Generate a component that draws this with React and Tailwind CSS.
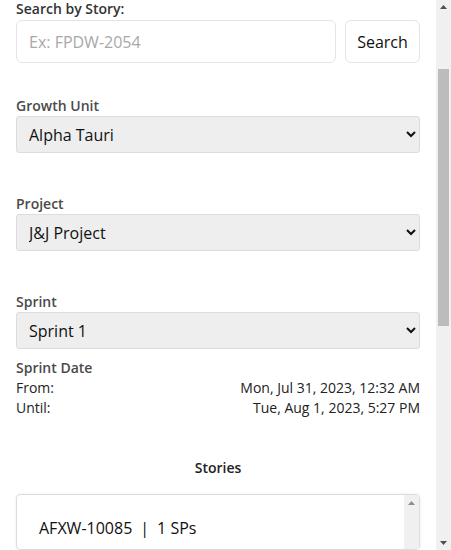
import React from "react";

const font = { fontFamily: '"Open Sans", "Noto Sans", sans-serif' };

function Field({ label, value }) {
  return (
    <div className="flex flex-col">
      <label className="text-[14px] leading-[20px] font-semibold text-[#4a4a4a]">{label}</label>
      <select
        defaultValue={value}
        className="h-[37px] w-full rounded-[3px] border border-[#dcdcdc] bg-[#eeeeee] pl-[8px] pr-2 text-[16px] text-[#111]"
      >
        <option>{value}</option>
      </select>
    </div>
  );
}

function Arrow({ up }) {
  return (
    <svg width="7" height="4" viewBox="0 0 7 4" className="fill-[#505050]">
      {up ? <polygon points="0,4 7,4 3.5,0" /> : <polygon points="0,0 7,0 3.5,4" />}
    </svg>
  );
}

export default function App() {
  return (
    <div className="flex h-[550px] w-[451px] overflow-hidden bg-white text-[#222]" style={font}>
      <div className="flex w-[436px] flex-col px-[16px]">
        <div className="text-[14px] leading-[18px] font-semibold text-[#333]">Search by Story:</div>
        <div className="mt-[2px] flex gap-[9px]">
          <input
            placeholder="Ex: FPDW-2054"
            className="h-[43px] w-[320px] rounded-[6px] border border-[#e2e5e8] px-[12px] text-[16px] placeholder:text-[#a8a8a8]"
          />
          <button className="h-[43px] w-[75px] rounded-[6px] border border-[#e2e5e8] bg-white text-[16px] text-[#111]">
            Search
          </button>
        </div>

        <div className="mt-[33px] flex flex-col gap-[41px]">
          <Field label="Growth Unit" value="Alpha Tauri" />
          <Field label="Project" value="J&J Project" />
          <Field label="Sprint" value="Sprint 1" />
        </div>

        <div className="mt-[9px] text-[14px] leading-[20px]">
          <div className="font-semibold text-[#4a4a4a]">Sprint Date</div>
          <div className="flex justify-between text-[#222]">
            <span>From:</span>
            <span>Mon, Jul 31, 2023, 12:32 AM</span>
          </div>
          <div className="flex justify-between text-[#222]">
            <span>Until:</span>
            <span>Tue, Aug 1, 2023, 5:27 PM</span>
          </div>
        </div>

        <div className="mt-[40px] text-center text-[14px] leading-[20px] font-semibold text-[#222]">Stories</div>

        <div className="mt-[16px] flex h-[120px] rounded-[4px] border border-[#dcdcdc] shadow-[0_0_3px_rgba(0,0,0,0.08)]">
          <div className="flex-1 pl-[22px] pt-[21px] text-[16px] leading-[24px] text-[#111]">
            <span>AFXW-10085</span>
            <span className="px-[8px] text-[#111]">|</span>
            <span>1 SPs</span>
          </div>
          <div className="flex w-[15px] flex-col items-center bg-[#f0f0f0] pt-[6px]">
            <div className="opacity-60"><Arrow up /></div>
          </div>
        </div>
      </div>

      <div className="flex w-[15px] flex-col items-center bg-[#f0f0f0]">
        <div className="pt-[5px]"><Arrow up /></div>
        <div className="mt-[60px] h-[257px] w-[11px] bg-[#bcbcbc]" />
        <div className="mt-auto pb-[5px]"><Arrow /></div>
      </div>
    </div>
  );
}
